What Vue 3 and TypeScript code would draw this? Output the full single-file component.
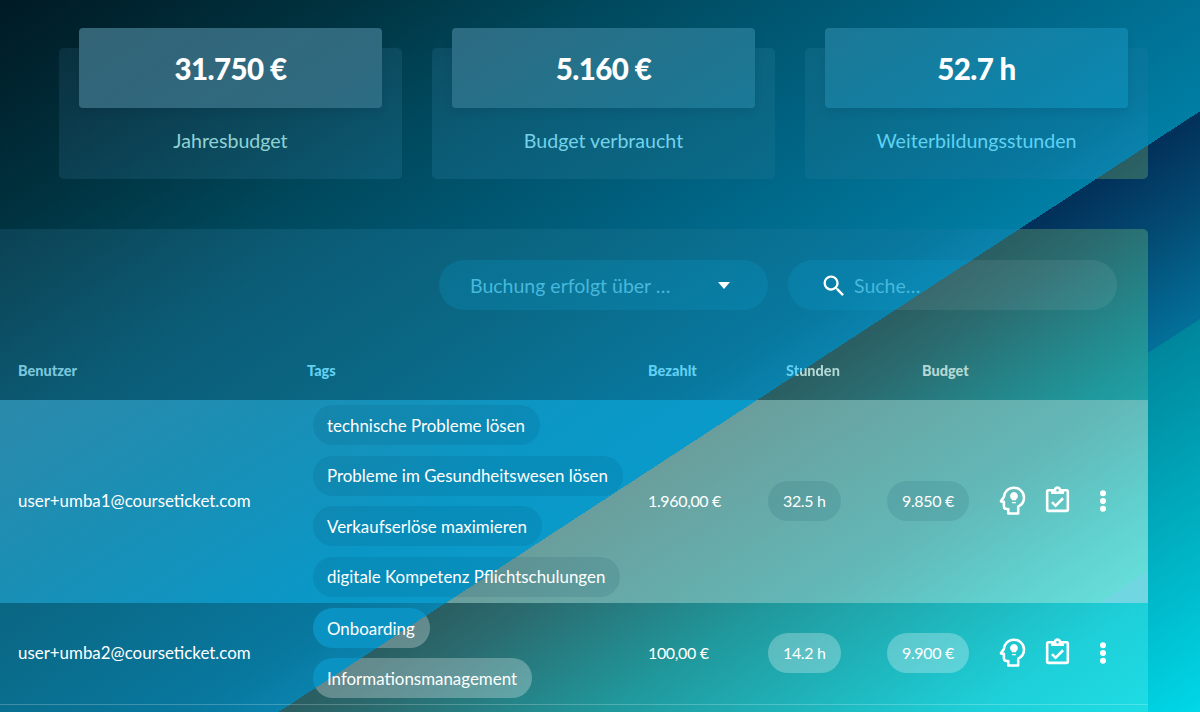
<script setup lang="ts">
interface Row {
  id: string
  email: string
  tags: string[]
  paid: string
  hours: string
  budget: string
  active: boolean
}

const stats = [
  { value: '31.750 €', label: 'Jahresbudget', tone: 'tone-a' },
  { value: '5.160 €', label: 'Budget verbraucht', tone: 'tone-b' },
  { value: '52.7 h', label: 'Weiterbildungsstunden', tone: 'tone-c' },
]

const rows: Row[] = [
  {
    id: 'u1',
    email: 'user+umba1@courseticket.com',
    tags: ['technische Probleme lösen', 'Probleme im Gesundheitswesen lösen', 'Verkaufserlöse maximieren', 'digitale Kompetenz Pflichtschulungen'],
    paid: '1.960,00 €',
    hours: '32.5 h',
    budget: '9.850 €',
    active: true,
  },
  {
    id: 'u2',
    email: 'user+umba2@courseticket.com',
    tags: ['Onboarding', 'Informationsmanagement'],
    paid: '100,00 €',
    hours: '14.2 h',
    budget: '9.900 €',
    active: false,
  },
]
</script>

<template>
  <div class="page">
    <section class="stats">
      <article v-for="s in stats" :key="s.label" class="stat surface">
        <div class="stat-value">{{ s.value }}</div>
        <div class="stat-label" :class="s.tone">{{ s.label }}</div>
      </article>
    </section>

    <section class="panel surface">
      <div class="filters">
        <div class="field select">
          <span class="hint">Buchung erfolgt über …</span>
          <span class="caret"></span>
        </div>
        <div class="field search">
          <svg class="magnify" viewBox="0 0 24 24" width="28" height="28" aria-hidden="true">
            <path fill="#fff" d="M9.5,3A6.5,6.5 0 0,1 16,9.5C16,11.11 15.41,12.59 14.44,13.73L14.71,14H15.5L20.5,19L19,20.5L14,15.5V14.71L13.73,14.44C12.59,15.41 11.11,16 9.5,16A6.5,6.5 0 0,1 3,9.5A6.5,6.5 0 0,1 9.5,3M9.5,5C7,5 5,7 5,9.5C5,12 7,14 9.5,14C12,14 14,12 14,9.5C14,7 12,5 9.5,5Z" />
          </svg>
          <span class="hint">Suche…</span>
        </div>
      </div>

      <div class="cols head">
        <span class="h-user">Benutzer</span>
        <span class="h-blue">Tags</span>
        <span class="h-blue">Bezahlt</span>
        <span class="h-split">Stunden</span>
        <span class="h-budget">Budget</span>
      </div>

      <div v-for="r in rows" :key="r.id" class="cols row" :class="r.active ? 'row-on' : 'row-off'">
        <div class="cell">{{ r.email }}</div>
        <div class="tags">
          <span v-for="t in r.tags" :key="t" class="pill tag">{{ t }}</span>
        </div>
        <div class="cell numeric">{{ r.paid }}</div>
        <div class="cell numeric"><span class="pill num">{{ r.hours }}</span></div>
        <div class="cell numeric"><span class="pill num">{{ r.budget }}</span></div>
        <div class="actions">
          <svg class="act" viewBox="0 0 24 24" width="35" height="35" aria-hidden="true">
            <path fill="none" stroke="#fff" stroke-width="1.75" stroke-linejoin="round" d="M13 3.2C9.2 3.2 6.3 6 6.1 9.7L4.2 12.2C4 12.5 4.2 12.9 4.6 12.9H6.1V16C6.1 17 6.9 17.8 8 17.8H9.1V20.9H15.9V16.2C18.3 15.1 19.9 12.8 19.9 10C19.9 6.2 16.8 3.2 13 3.2Z" />
            <path fill="#fff" d="M13 6.2A2.7 2.7 0 0 1 14.5 11.1V11.9H11.5V11.1A2.7 2.7 0 0 1 13 6.2ZM11.7 13.1H14.3V13.9H11.7Z" />
          </svg>
          <svg class="act" viewBox="0 0 24 24" width="31" height="31" aria-hidden="true">
            <path fill="#fff" d="M19,3H14.82C14.4,1.84 13.3,1 12,1C10.7,1 9.6,1.84 9.18,3H5A2,2 0 0,0 3,5V19A2,2 0 0,0 5,21H19A2,2 0 0,0 21,19V5A2,2 0 0,0 19,3M12,3A1,1 0 0,1 13,4A1,1 0 0,1 12,5A1,1 0 0,1 11,4A1,1 0 0,1 12,3M7,7H17V5H19V19H5V5H7V7M17,11L15.59,9.58L10.5,14.67L8.41,12.58L7,14L10.5,17.5L17,11Z" />
          </svg>
          <svg class="act" viewBox="0 0 30 30" width="30" height="30" aria-hidden="true">
            <circle cx="15" cy="7.3" r="3" fill="#fff" />
            <circle cx="15" cy="15" r="3" fill="#fff" />
            <circle cx="15" cy="22.7" r="3" fill="#fff" />
          </svg>
        </div>
      </div>
    </section>
  </div>
</template>

<style>
html, body { margin: 0; background: #003a50; }
</style>

<style scoped>
.page {
  width: 1200px;
  height: 712px;
  overflow: hidden;
  box-sizing: border-box;
  padding-top: 48px;
  color: #fff;
  font-family: Lato, "Noto Sans", sans-serif;
  background:
    linear-gradient(146.9deg, #001a24 0%, #00323f 15%, #00485c 26%, #006484 44%, #007ea4 59.8%, transparent 59.8%),
    linear-gradient(146.9deg, #02305a 59.8%, #034a72 66%, #03709a 73.7%, #00869c 73.7%, #00bacb 91%, #00d8e8 100%);
  background-attachment: fixed;
}
.surface {
  background: linear-gradient(146.9deg, #0a2f3d 5%, #0c4a5e 20%, #0b5c76 30%, #0a6a88 44%, #08789f 56%, #0a82ac 59.8%, #2a5e62 59.8%, #2a6c70 64%, #20989c 74%, #1ecfd8 90%, #1ee0e8 100%) fixed;
}
.stats {
  display: flex;
  gap: 30px;
  padding-left: 59px;
}
.stat {
  width: 343px;
  height: 131px;
  border-radius: 5px;
  box-sizing: border-box;
  padding: 0 20px;
}
.stat-value {
  margin-top: -20px;
  height: 80px;
  border-radius: 4px;
  display: flex;
  align-items: center;
  justify-content: center;
  font-size: 29.5px;
  font-weight: 900;
  letter-spacing: -0.6px;
  background: linear-gradient(146.9deg, #356273 0%, #2f6a80 20%, #1f7590 35%, #0f82a8 50%, #0a8ab4 57%) fixed;
  box-shadow: 0 5px 9px rgba(0, 20, 40, 0.07);
}
.stat-label {
  margin-top: 20px;
  text-align: center;
  font-size: 19.6px;
  line-height: 26px;
}
.tone-a { color: #8fd2d4; }
.tone-b { color: #74d2ea; }
.tone-c { color: #5fd2f2; }

.panel {
  width: 1148px;
  height: 560px;
  margin-top: 50px;
  border-radius: 0 5px 0 0;
}
.filters {
  display: flex;
  justify-content: flex-end;
  gap: 20px;
  padding: 31px 31px 0 0;
}
.field {
  width: 329px;
  height: 50px;
  border-radius: 25px;
  display: flex;
  align-items: center;
  box-sizing: border-box;
  background: linear-gradient(146.9deg, rgba(10, 160, 210, 0.22) 59.8%, rgba(255, 255, 255, 0.07) 59.8%) fixed;
}
.select { padding: 0 38px 0 31px; justify-content: space-between; }
.search { padding-left: 32px; gap: 6px; }
.hint { font-size: 19.5px; color: #48b8dc; }
.caret {
  width: 0;
  height: 0;
  border-left: 6.5px solid transparent;
  border-right: 6.5px solid transparent;
  border-top: 7px solid #fff;
}
.magnify { margin-top: 1px; }

.cols {
  display: grid;
  grid-template-columns: 289px 341px 120px 119px 103px 135px;
  padding-left: 18px;
  align-items: center;
}
.head {
  height: 90px;
  box-sizing: border-box;
  padding-top: 30px;
  font-size: 14.5px;
  font-weight: 900;
}
.h-user { color: #7cc6dc; }
.h-blue { color: #62d0f2; }
.h-budget { padding-left: 35px; color: #b6d8d4; }
.h-split {
  margin-left: 18px;
  color: transparent;
  width: max-content;
  background: linear-gradient(146.9deg, #62d0f2 59.8%, #b6d8d4 59.8%) fixed;
  -webkit-background-clip: text;
  background-clip: text;
}

.row { font-size: 16.9px; }
.row-on {
  height: 203px;
  background:
    linear-gradient(146.9deg, transparent 88.3%, #70d6e2 88.3%) fixed,
    linear-gradient(146.9deg, #2a8aac 28%, #1a8fb5 40%, #0a97c6 53%, #0a9aca 59.8%, #6a9e9c 59.8%, #62b9b8 76%, #60cfcd 83%, #65dcd8 88%, #6ae0dc 100%) fixed;
}
.row-off {
  height: 101px;
  border-bottom: 1px solid rgba(255, 255, 255, 0.22);
}
.cell { display: flex; align-items: center; padding-bottom: 2px; }
.numeric { font-size: 16px; letter-spacing: -0.35px; }
.tags {
  height: 100%;
  box-sizing: border-box;
  padding: 5px 0 6px 6px;
  display: flex;
  flex-direction: column;
  justify-content: space-between;
  align-items: flex-start;
}
.pill {
  height: 40px;
  border-radius: 20px;
  display: inline-flex;
  align-items: center;
  box-sizing: border-box;
  padding: 0 15px 0 14px;
  white-space: nowrap;
}
.row-on .pill { background: rgba(0, 50, 80, 0.1); }
.row-off .pill {
  background: linear-gradient(146.9deg, #0a92c2 59.8%, rgba(255, 255, 255, 0.27) 59.8%) fixed;
}
.num { padding: 0 15px; }
.actions {
  display: grid;
  grid-template-columns: repeat(3, 45px);
  justify-items: center;
  align-items: center;
  padding-bottom: 2px;
}
</style>
